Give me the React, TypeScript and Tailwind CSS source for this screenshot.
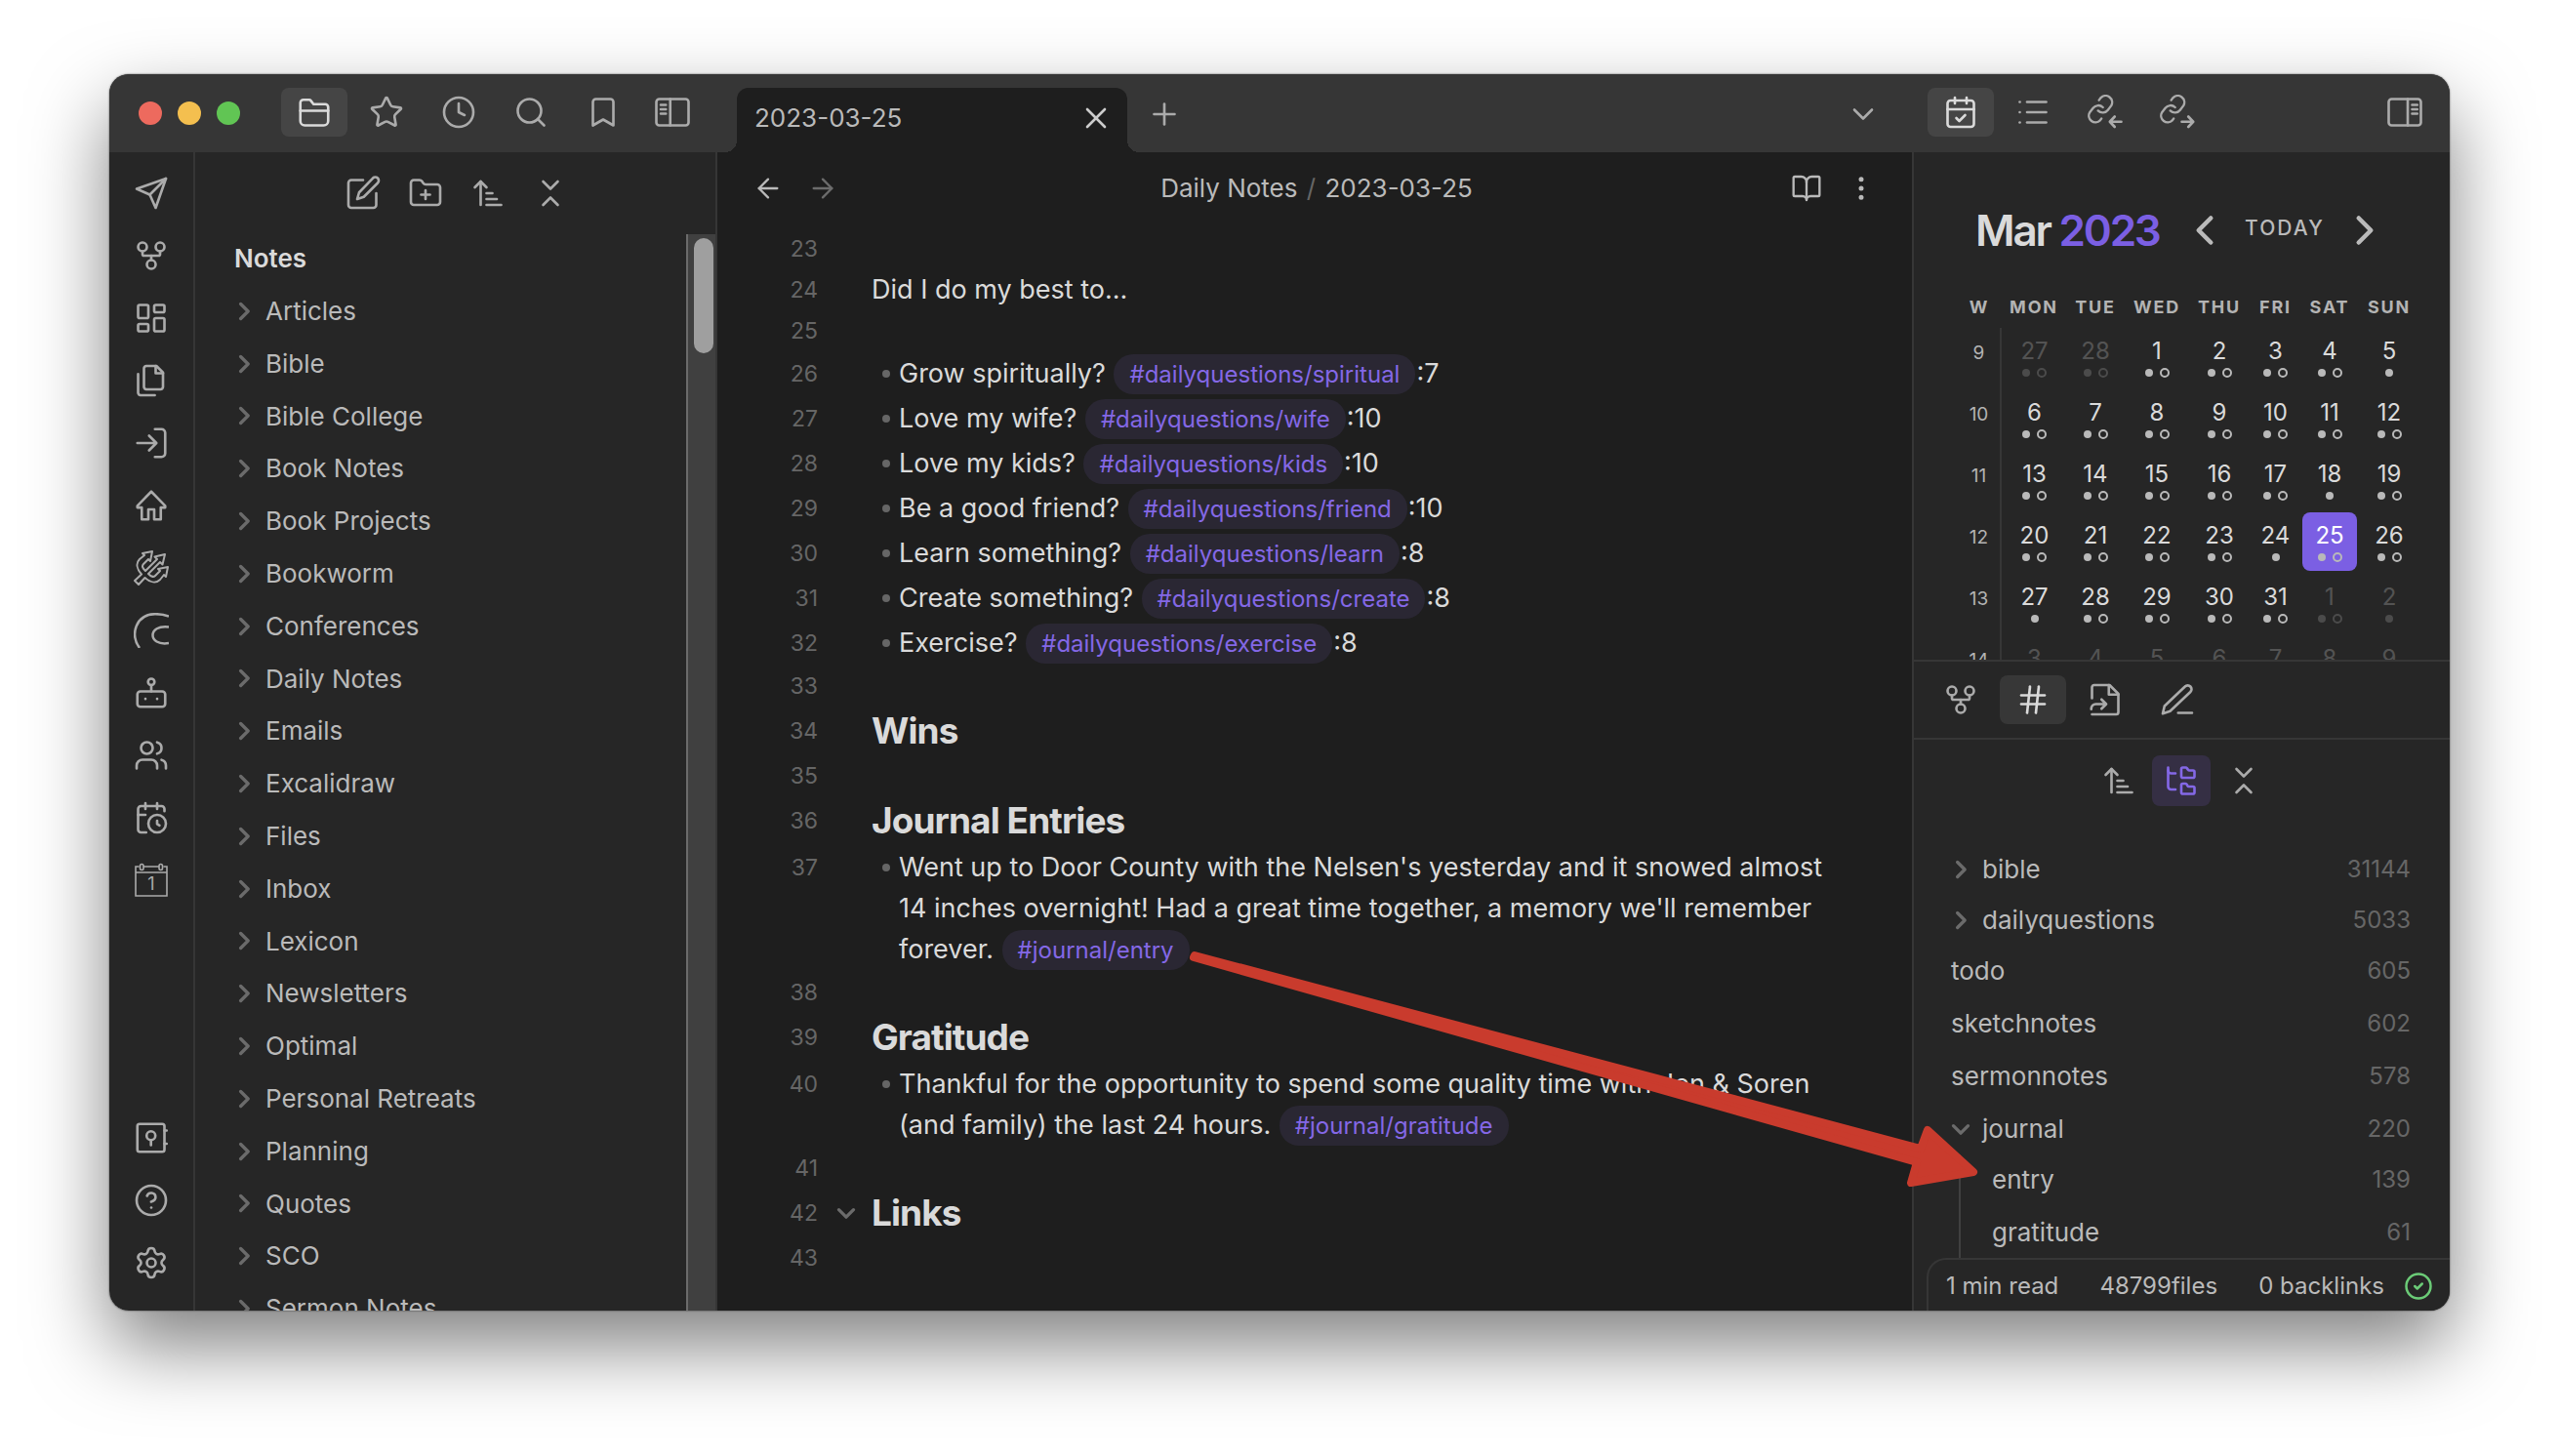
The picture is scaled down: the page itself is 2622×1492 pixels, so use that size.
import React from "react";
import {
  ArrowLeft, ArrowRight, ArrowUpNarrowWide, Bookmark, BookOpen, CalendarClock,
  ChevronDown, ChevronLeft, ChevronRight, ChevronsDownUp, CircleCheck, CircleHelp, Clock, EllipsisVertical, FolderPlus,
  FolderTree, GitFork, Hash, LayoutDashboard, List, Plus, Search, Settings, Star, Users, X,
} from "lucide-react";

type IconProps = { className?: string; children?: React.ReactNode; viewBox?: string; sw?: number };

function Svg({ className = "size-9", children, viewBox = "0 0 24 24", sw = 1.75 }: IconProps) {
  return (
    <svg className={className} viewBox={viewBox} fill="none" stroke="currentColor" strokeWidth={sw} strokeLinecap="round" strokeLinejoin="round" aria-hidden="true">
      {children}
    </svg>
  );
}

const FolderIcon = () => (
  <Svg>
    <path d="M2.5 9.5V5.5a2 2 0 0 1 2-2h4.2a1 1 0 0 1 .8.4l2 2.6h8a2 2 0 0 1 2 2v9.5a3 3 0 0 1-3 3h-13a3 3 0 0 1-3-3z" />
    <path d="M2.5 11h19" />
  </Svg>
);
const SidebarLeft = () => (
  <Svg>
    <rect x="1" y="3" width="22" height="18" rx="2" />
    <path d="M10.5 3v18M4 7h3.5M4 10h3.5M4 13h3.5" />
  </Svg>
);
const SidebarRight = () => (
  <Svg>
    <rect x="1" y="3" width="22" height="18" rx="2" />
    <path d="M14 3v18M17 7h3.5M17 10h3.5M17 13h3.5" />
  </Svg>
);
const CalendarCheckIcon = () => (
  <Svg>
    <rect x="3" y="4" width="18" height="18" rx="2" />
    <path d="M16 2v4M8 2v4M3 10h18M9 16l2 2 4-4" />
  </Svg>
);
const SendIcon = () => (
  <Svg>
    <path d="m22 2-7 20-4-9-9-4Z" />
    <path d="M22 2 11 13" />
  </Svg>
);
const FilesIcon = () => (
  <Svg>
    <path d="M15.5 2H8.6c-.4 0-.8.2-1.1.5-.3.3-.5.7-.5 1.1v12.8c0 .4.2.8.5 1.1.3.3.7.5 1.1.5h9.8c.4 0 .8-.2 1.1-.5.3-.3.5-.7.5-1.1V6.5L15.5 2z" />
    <path d="M3 7.6v12.8c0 .4.2.8.5 1.1.3.3.7.5 1.1.5h9.8" />
    <path d="M15 2v5h5" />
  </Svg>
);
const LogInIcon = () => (
  <Svg>
    <path d="M14.5 2.5H19a2.5 2.5 0 0 1 2.5 2.5v14a2.5 2.5 0 0 1-2.5 2.5h-4.5M2.5 12H15M10.5 7l5 5-5 5" />
  </Svg>
);
const HomeIcon = () => (
  <Svg>
    <path d="M12 2.5 2.5 12.2v1.2h3v8.1H10v-6.8h4v6.8h4.5v-8.1h3v-1.2z" />
  </Svg>
);
const TridentIcon = () => (
  <Svg viewBox="0 0 36 36" sw={2}>
    <path d="M1 31 8 24.500C3 19 2 13 6 9l5-4-2-2 10-2-2 10-2-2-5 5c-2 2-1 4 2 7L24 9l-2.500-2.500L32 4l-2.500 10.500L27 12 15 24c3 3 5 4 7 2l5-5-2-2 10-2-2 10-2-2-4 5c-4 4-10 3-15.500-2L5 35z" />
  </Svg>
);
const ArcsIcon = () => (
  <Svg viewBox="0 0 36 36" sw={2.5}>
    <path d="M6 36C-4 22 2 1.500 22 1.200c5 0 10 .8 14 2.500M36 14.500c-22-3-22 20 0 16.500" strokeLinecap="butt" />
  </Svg>
);
const BotIcon = () => (
  <Svg>
    <rect x="2.500" y="11" width="19" height="10.500" rx="2" />
    <circle cx="12" cy="4.500" r="2.200" />
    <path d="M12 6.700V11M8 16v.1M16 16v.1" />
  </Svg>
);
const DayOneIcon = () => (
  <Svg viewBox="0 0 36 36" sw={1.6}>
    <path d="M5 4H2v30h32V4h-3M10.500 4h15M2 10h32" strokeLinejoin="miter" />
    <rect x="6.500" y="1.500" width="3.500" height="6" rx="1.700" />
    <rect x="26" y="1.500" width="3.500" height="6" rx="1.700" />
    <text x="18" y="28" textAnchor="middle" fontSize="18" fontFamily="Inter" fill="currentColor" stroke="none">1</text>
  </Svg>
);
const VaultIcon = () => (
  <Svg>
    <rect x="2.500" y="2.500" width="18.500" height="19" rx="1.500" />
    <circle cx="11.800" cy="10.500" r="3" />
    <path d="M11.800 13.500v3.500M21 7h1.500M21 16h1.500" />
  </Svg>
);
const LinkArrow = ({ out }: { out?: boolean }) => (
  <Svg>
    <g transform="translate(-2 -1) scale(.9) rotate(-8 12 12)">
      <path d="M10 13a5 5 0 0 0 7.500.5l3-3a5 5 0 0 0-7-7l-1.700 1.700" />
      <path d="M14 11a5 5 0 0 0-7.500-.5l-3 3a5 5 0 0 0 7 7l1.200-1.200" />
    </g>
    {out ? <path d="M15 18.500h7.500M19.500 15l3.300 3.500-3.300 3.500" /> : <path d="M15.500 18.500H23M18.500 15l-3.300 3.500 3.300 3.500" />}
  </Svg>
);
const FileInputIcon = () => (
  <Svg>
    <path d="M3 11V3.500A1.500 1.500 0 0 1 4.500 2H15l6 6v12.500a1.500 1.500 0 0 1-1.500 1.500H3" />
    <path d="M14.500 2v6.500H21M2.500 18.500V18a3 3 0 0 1 3-3H12M9.500 11.800l3.200 3.200-3.200 3.200" />
  </Svg>
);
const PenLineIcon = () => (
  <Svg>
    <path d="M12.500 21H22M17.200 3a2.600 2.600 0 0 1 3.700 3.700L7 19.800l-5 1.700 1.200-5.200z" />
  </Svg>
);
const EditIcon = () => (
  <Svg>
    <path d="M12 3H4a2 2 0 0 0-2 2v15a2 2 0 0 0 2 2h15a2 2 0 0 0 2-2v-8" />
    <path d="M18.700 1.700a2.300 2.300 0 0 1 3.300 3.300L12.500 14.500 8 16l1.300-4.500z" />
  </Svg>
);

function Fold({ open }: { open?: boolean }) {
  return (
    <svg className={open ? "size-5 shrink-0 text-[#6b6b6b]" : "size-5 shrink-0 -rotate-90 text-[#6b6b6b]"} viewBox="0 0 24 24" fill="none" stroke="currentColor" strokeWidth="4" strokeLinecap="round" strokeLinejoin="round" aria-hidden="true">
      <path d="M3 8L12 17L21 8" />
    </svg>
  );
}

function BarButton({ label, active, children }: { label: string; active?: boolean; children: React.ReactNode }) {
  return (
    <button
      aria-label={label}
      className={
        active
          ? "flex h-[50px] w-[68px] items-center justify-center rounded-lg bg-white/8 text-[#dadada]"
          : "flex h-[50px] w-[68px] items-center justify-center rounded-lg text-[#ababab]"
      }
    >
      {children}
    </button>
  );
}

const S = { size: 36, strokeWidth: 1.75 };

const ribbon: [string, React.ReactNode][] = [
  ["Send", <SendIcon />],
  ["Graph view", <GitFork {...S} />],
  ["Canvas", <LayoutDashboard {...S} />],
  ["Files", <FilesIcon />],
  ["Open", <LogInIcon />],
  ["Home", <HomeIcon />],
  ["Trident", <TridentIcon />],
  ["Arcs", <ArcsIcon />],
  ["Assistant", <BotIcon />],
  ["People", <Users {...S} />],
  ["Schedule", <CalendarClock {...S} />],
  ["Daily note", <DayOneIcon />],
];

const folders = [
  "Articles", "Bible", "Bible College", "Book Notes", "Book Projects", "Bookworm", "Conferences",
  "Daily Notes", "Emails", "Excalidraw", "Files", "Inbox", "Lexicon", "Newsletters", "Optimal",
  "Personal Retreats", "Planning", "Quotes", "SCO", "Sermon Notes",
];

const Tag = ({ children }: { children: string }) => (
  <a href="#tag" className="mx-px inline-block rounded-[20px] bg-[#2a2733] px-4 text-2xl leading-[41px] text-[#8468e6]">
    {children}
  </a>
);

function Line({ n, children, kind = "plain", fold }: { n: number; children?: React.ReactNode; kind?: "plain" | "bullet" | "heading"; fold?: boolean }) {
  const pad = kind === "bullet" ? "py-0.5" : kind === "heading" ? "py-1" : "";
  return (
    <div className={`flex ${pad}`}>
      <span className="w-[103px] shrink-0 text-right text-[23px] leading-[42px] text-[#666666]">{n}</span>
      <span className="flex h-[42px] w-[55px] shrink-0 items-center pl-[19px]">{fold && <Fold open />}</span>
      {kind === "bullet" ? (
        <div className="flex min-w-0 flex-1">
          <span className="flex h-[42px] w-7 shrink-0 items-center pl-[11px]">
            <span className="size-2 rounded-full bg-[#666666]" />
          </span>
          <p className="min-w-0 flex-1 leading-[42px]">{children}</p>
        </div>
      ) : kind === "heading" ? (
        <h2 className="text-[37px] leading-[42px] font-bold tracking-tight">{children}</h2>
      ) : (
        <p className="min-w-0 flex-1 leading-[42px]">{children}</p>
      )}
    </div>
  );
}

const questions: [string, string, number][] = [
  ["Grow spiritually?", "spiritual", 7],
  ["Love my wife?", "wife", 10],
  ["Love my kids?", "kids", 10],
  ["Be a good friend?", "friend", 10],
  ["Learn something?", "learn", 8],
  ["Create something?", "create", 8],
  ["Exercise?", "exercise", 8],
];

const weeks: { w: number; days: number[]; muted?: number[]; single?: number[] }[] = [
  { w: 9, days: [27, 28, 1, 2, 3, 4, 5], muted: [0, 1], single: [6] },
  { w: 10, days: [6, 7, 8, 9, 10, 11, 12] },
  { w: 11, days: [13, 14, 15, 16, 17, 18, 19], single: [5] },
  { w: 12, days: [20, 21, 22, 23, 24, 25, 26], single: [4] },
  { w: 13, days: [27, 28, 29, 30, 31, 1, 2], muted: [5, 6], single: [0, 6] },
  { w: 14, days: [3, 4, 5, 6, 7, 8, 9], muted: [0, 1, 2, 3, 4, 5, 6] },
];

function Calendar() {
  return (
    <section aria-label="Calendar" className="h-[520px] shrink-0 overflow-hidden pr-[29px] pl-[45px]">
      <div className="flex h-[150px] items-center pt-2.5 pl-[18px]">
        <h3 className="text-[44px] font-semibold tracking-tighter whitespace-nowrap">
          Mar <span className="text-[#7b5fe3]">2023</span>
        </h3>
        <div className="ml-auto flex items-center pr-[33px] text-[#bababa]">
          <button aria-label="Previous month"><ChevronLeft size={50} strokeWidth={2.2} /></button>
          <button className="px-4 pb-1 text-[21px] font-medium tracking-widest">TODAY</button>
          <button aria-label="Next month"><ChevronRight size={50} strokeWidth={2.2} /></button>
        </div>
      </div>
      <table className="w-full table-fixed border-collapse text-center">
        <colgroup>
          <col className="w-[44px]" /><col className="w-[68px]" /><col className="w-[58px]" /><col className="w-[68px]" />
          <col className="w-[60px]" /><col className="w-[55px]" /><col className="w-[56px]" /><col className="w-[66px]" />
        </colgroup>
        <thead>
          <tr className="text-lg leading-none font-bold tracking-widest text-[#b3b3b3]">
            {["W", "MON", "TUE", "WED", "THU", "FRI", "SAT", "SUN"].map((d) => (
              <th key={d} className="p-0 pb-3">{d}</th>
            ))}
          </tr>
        </thead>
        <tbody>
          {weeks.map((wk) => (
            <tr key={wk.w} className="h-[63px]">
              <td className="border-r-2 border-[#363636] p-0 align-top text-[19px] leading-[52px] text-[#b3b3b3]">{wk.w}</td>
              {wk.days.map((d, i) => {
                const sel = wk.w === 12 && i === 5;
                const muted = wk.muted?.includes(i);
                return (
                  <td key={i} className="p-0 align-top">
                    <button
                      className={
                        sel
                          ? "flex h-[60px] w-full flex-col items-center rounded-lg bg-[#7b5fe3] pt-2 text-white"
                          : muted
                            ? "flex h-[60px] w-full flex-col items-center pt-2 text-[#dadada] opacity-25"
                            : "flex h-[60px] w-full flex-col items-center pt-2 text-[#dadada]"
                      }
                    >
                      <span className="text-2xl leading-8">{d}</span>
                      <span className="flex h-3 items-center gap-[7px]">
                        <span className="size-2 rounded-full bg-[#b9b9b9]" />
                        {!wk.single?.includes(i) && <span className="size-2.5 rounded-full border-2 border-[#b9b9b9]" />}
                      </span>
                    </button>
                  </td>
                );
              })}
            </tr>
          ))}
        </tbody>
      </table>
    </section>
  );
}

function TagRow({ name, count, state }: { name: string; count: number; state?: "closed" | "open" }) {
  return (
    <button className={state ? "flex h-[52px] w-full items-start text-left" : "flex h-[54px] w-full items-start text-left"}>
      {state && <span className="flex h-[52px] w-8 items-center"><Fold open={state === "open"} /></span>}
      <span className="leading-[52px] text-[#bababa]">{name}</span>
      <span className="ml-auto text-2xl leading-[52px] text-[#666666]">{count}</span>
    </button>
  );
}

export default function App() {
  return (
    <div className="h-screen overflow-hidden bg-white px-28 pt-[76px] pb-[149px] font-['Inter',sans-serif] text-[26px] text-[#dadada]">
      <div className="relative flex h-full flex-col rounded-[20px] shadow-[0_0_2px_rgba(0,0,0,0.7),0_36px_80px_rgba(0,0,0,0.5)]">
        <div className="flex min-h-0 flex-1 flex-col overflow-hidden rounded-[20px] bg-[#262626]">
          <header className="flex h-20 shrink-0 bg-[#363636]">
            <div className="flex w-[643px] shrink-0 items-start pt-3.5 pl-[30px]">
              <div className="mr-[42px] flex h-[52px] items-center gap-4">
                <span className="size-6 rounded-full bg-[#ed6a5e]" />
                <span className="size-6 rounded-full bg-[#f4bf4f]" />
                <span className="size-6 rounded-full bg-[#61c554]" />
              </div>
              <nav className="flex gap-1.5">
                <BarButton label="File explorer" active><FolderIcon /></BarButton>
                <BarButton label="Starred"><Star {...S} /></BarButton>
                <BarButton label="Recent"><Clock {...S} /></BarButton>
                <BarButton label="Search"><Search {...S} /></BarButton>
                <BarButton label="Bookmarks"><Bookmark {...S} /></BarButton>
                <button aria-label="Toggle left sidebar" className="flex h-[50px] w-[62px] items-center justify-center text-[#ababab]"><SidebarLeft /></button>
              </nav>
            </div>
            <div className="relative mt-3.5 flex w-[400px] shrink-0 items-start justify-between rounded-t-xl bg-[#1e1e1e] pt-[13px] pr-3.5 pl-[18px]">
              <span className="absolute bottom-0 -left-3 size-3 bg-[radial-gradient(circle_at_0_0,#363636_12px,#1e1e1e_12px)]" />
              <span className="absolute -right-3 bottom-0 size-3 bg-[radial-gradient(circle_at_100%_0,#363636_12px,#1e1e1e_12px)]" />
              <span className="leading-9 text-[#bababa]">2023-03-25</span>
              <button aria-label="Close tab" className="text-[#cccccc]"><X {...S} /></button>
            </div>
            <div className="flex flex-1 items-start justify-between pt-[23px] pr-[34px] pl-5 text-[#ababab]">
              <button aria-label="New tab"><Plus {...S} /></button>
              <button aria-label="Tab list"><ChevronDown {...S} /></button>
            </div>
            <div className="flex w-[549px] shrink-0 items-start gap-1.5 pt-3.5 pr-3 pl-3.5">
              <BarButton label="Calendar" active><CalendarCheckIcon /></BarButton>
              <BarButton label="Outline"><List {...S} /></BarButton>
              <BarButton label="Backlinks"><LinkArrow /></BarButton>
              <BarButton label="Outgoing links"><LinkArrow out /></BarButton>
              <div className="ml-auto"><BarButton label="Toggle right sidebar"><SidebarRight /></BarButton></div>
            </div>
          </header>

          <div className="flex min-h-0 flex-1">
            <nav className="flex w-22 shrink-0 flex-col items-center gap-7 border-r-2 border-[#363636] pt-6 pb-[31px] text-[#ababab]">
              {ribbon.map(([label, icon]) => (
                <button key={label} aria-label={label}>{icon}</button>
              ))}
              <button aria-label="Vault" className="mt-auto"><VaultIcon /></button>
              <button aria-label="Help"><CircleHelp {...S} /></button>
              <button aria-label="Settings"><Settings {...S} /></button>
            </nav>

            <aside className="flex w-[535px] shrink-0 flex-col border-r-2 border-[#363636]">
              <div className="flex h-[84px] shrink-0 items-center justify-center gap-7 pl-0.5 text-[#ababab]">
                <button aria-label="New note"><EditIcon /></button>
                <button aria-label="New folder"><FolderPlus {...S} /></button>
                <button aria-label="Sort order"><ArrowUpNarrowWide {...S} /></button>
                <button aria-label="Collapse all"><ChevronsDownUp {...S} /></button>
              </div>
              <div className="flex min-h-0 flex-1">
                <div className="min-w-0 flex-1 overflow-hidden pl-10">
                  <h1 className="h-[54px] leading-[50px] font-semibold">Notes</h1>
                  <ul className="leading-[1.3]">
                    {folders.map((f) => (
                      <li key={f} className="mb-1">
                        <button className="flex items-center gap-3 py-2 text-[#bababa]">
                          <Fold />
                          {f}
                        </button>
                      </li>
                    ))}
                  </ul>
                </div>
                <div className="w-[30px] shrink-0 border-l-2 border-[#6b6b6b] bg-[#404040] pt-1 pl-1.5">
                  <div className="h-[118px] w-5 rounded-full bg-[#9f9f9f]" />
                </div>
              </div>
            </aside>

            <main className="min-w-0 flex-1 overflow-hidden bg-[#1e1e1e]">
              <div className="flex h-[73px] items-center justify-between px-9 text-[#bababa]">
                <div className="flex gap-6">
                  <button aria-label="Back"><ArrowLeft size={32} strokeWidth={1.75} /></button>
                  <button aria-label="Forward" className="opacity-50"><ArrowRight size={32} strokeWidth={1.75} /></button>
                </div>
                <div className="pl-1">Daily Notes <span className="px-0.5 text-[#666666]">/</span> 2023-03-25</div>
                <div className="flex gap-6">
                  <button aria-label="Reading view"><BookOpen size={32} strokeWidth={1.75} /></button>
                  <button aria-label="More options"><EllipsisVertical size={32} strokeWidth={1.75} /></button>
                </div>
              </div>
              <article className="pt-[5px] pr-[78px] text-[27px]">
                <Line n={23} />
                <Line n={24}>Did I do my best to...</Line>
                <Line n={25} />
                {questions.map(([q, t, v], i) => (
                  <Line key={t} n={26 + i} kind="bullet">
                    {q} <Tag>{`#dailyquestions/${t}`}</Tag>:{v}
                  </Line>
                ))}
                <Line n={33} />
                <Line n={34} kind="heading">Wins</Line>
                <Line n={35} />
                <Line n={36} kind="heading">Journal Entries</Line>
                <Line n={37} kind="bullet">
                  Went up to Door County with the Nelsen's yesterday and it snowed almost 14 inches overnight! Had a great time together, a memory we'll remember forever. <Tag>#journal/entry</Tag>
                </Line>
                <Line n={38} />
                <Line n={39} kind="heading">Gratitude</Line>
                <Line n={40} kind="bullet">
                  Thankful for the opportunity to spend some quality time with Jen &amp; Soren (and family) the last 24 hours. <Tag>#journal/gratitude</Tag>
                </Line>
                <Line n={41} />
                <Line n={42} kind="heading" fold>Links</Line>
                <Line n={43} />
              </article>
            </main>

            <aside className="relative flex w-[551px] shrink-0 flex-col border-l-2 border-[#363636]">
              <Calendar />
              <div className="flex h-[82px] shrink-0 items-center gap-1.5 border-y-2 border-[#363636] pl-3.5">
                <BarButton label="Graph"><GitFork {...S} /></BarButton>
                <BarButton label="Tags" active><Hash {...S} /></BarButton>
                <BarButton label="File links"><FileInputIcon /></BarButton>
                <BarButton label="Drawing"><PenLineIcon /></BarButton>
              </div>
              <div className="flex h-[107px] shrink-0 justify-center gap-2.5 pt-4 pr-0.5 text-[#ababab]">
                <button aria-label="Sort tags" className="flex h-[52px] w-12 items-center justify-center"><ArrowUpNarrowWide {...S} /></button>
                <button aria-label="Nested tags" className="flex h-[52px] w-[60px] items-center justify-center rounded-lg bg-[#352f44] text-[#8468e6]"><FolderTree {...S} /></button>
                <button aria-label="Collapse tags" className="flex h-[52px] w-12 items-center justify-center"><ChevronsDownUp {...S} /></button>
              </div>
              <div className="min-h-0 flex-1 overflow-hidden pr-10 pl-[38px]">
                <TagRow name="bible" count={31144} state="closed" />
                <TagRow name="dailyquestions" count={5033} state="closed" />
                <TagRow name="todo" count={605} />
                <TagRow name="sketchnotes" count={602} />
                <TagRow name="sermonnotes" count={578} />
                <TagRow name="journal" count={220} state="open" />
                <div className="ml-2 border-l-2 border-[#404040] pb-5 pl-8">
                  <TagRow name="entry" count={139} />
                  <TagRow name="gratitude" count={61} />
                </div>
              </div>
              <footer className="absolute right-0 bottom-0 left-[13px] flex h-[54px] items-center rounded-tl-[20px] border-t-2 border-l-2 border-[#363636] bg-[#262626] pt-0.5 pr-[17px] pl-[18px] text-2xl text-[#bababa]">
                <span>1 min read</span>
                <span className="ml-auto">48799files</span>
                <span className="mr-5 ml-auto">0 backlinks</span>
                <CircleCheck size={30} strokeWidth={2} className="text-[#6bcb77]" />
              </footer>
            </aside>
          </div>
        </div>

        <svg className="pointer-events-none absolute top-[880px] right-[470px] h-[280px] w-[840px]" viewBox="0 0 840 280" fill="#c93b2d" stroke="#c93b2d" strokeWidth="8" strokeLinejoin="round" aria-hidden="true">
          <path d="M24 23 768 221 775 202 822 245 758 256 764 235 23 25z" />
        </svg>
      </div>
    </div>
  );
}
